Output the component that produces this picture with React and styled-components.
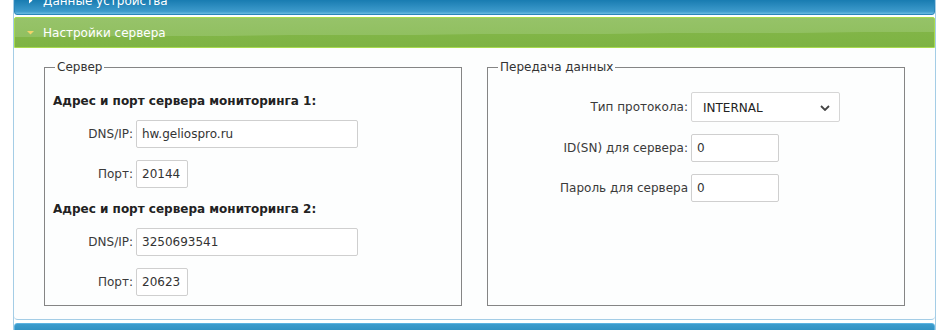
import styled, { createGlobalStyle } from 'styled-components'

const GlobalStyle = createGlobalStyle`
  html, body {
    margin: 0;
    padding: 0;
    background: #ffffff;
    overflow: hidden;
  }
  body {
    font-family: "DejaVu Sans", Verdana, sans-serif;
    font-size: 12px;
    color: #333;
  }
`

const Accordion = styled.div`
  margin-left: 13px;
  width: 921px;
  border-left: 1px solid #a4cde6;
  border-right: 1px solid #a4cde6;
  display: flex;
  flex-direction: column;
`

const Header = styled.div`
  box-sizing: border-box;
  height: ${(p) => (p.active ? 31 : 29)}px;
  display: flex;
  align-items: center;
  gap: 9px;
  padding-left: 12px;
  color: #fff;
  font-size: 12px;
  line-height: 14px;
  border-radius: ${(p) => (p.active ? '2px 2px 0 0' : '3px')};
  border: 1px solid ${(p) => (p.active ? '#a8da4e' : '#2a86ba')};
  background: ${(p) =>
    p.active
      ? 'linear-gradient(179.7deg, #97c36a 0%, #91c061 55%, #81b547 56%, #7db343 100%)'
      : 'linear-gradient(180deg, #0d6aa0 0%, #1a7db2 50%, #3d9acb 90%, #6bbbe2 100%)'};
  margin-top: ${(p) => p.shift || 0}px;
  margin-bottom: ${(p) => (p.active ? 0 : 2)}px;
`

const BottomHeader = styled(Header)`
  margin-top: 3px;
  border-color: #5cb3e0;
  background: linear-gradient(180deg, #3c9ccd 0%, #2e8fbf 30%, #2a88b8 100%);
`

const Arrow = styled.svg`
  flex: none;
  width: 7px;
  height: 7px;
`

const Content = styled.div`
  background: #fdfefe;
  border-bottom: 1px solid #a4cde6;
  border-radius: 0 0 4px 4px;
  padding: 12px 0 13px 30px;
  display: grid;
  grid-template-columns: 418px 418px;
  column-gap: 25px;
`

const Fieldset = styled.fieldset`
  margin: 0;
  box-sizing: border-box;
  border: 1px solid #858585;
  padding: ${(p) => p.top}px 8px 9px 8px;
  display: flex;
  flex-direction: column;
  min-width: 0;
`

const Legend = styled.legend`
  margin-left: 2px;
  padding: 0 2px;
  font-size: 12px;
  line-height: 14px;
  color: #333;
`

const Heading = styled.div`
  font-weight: bold;
  font-size: 12px;
  line-height: 14px;
  color: #222;
  margin-bottom: 12px;
  margin-top: ${(p) => (p.second ? 14 : 0)}px;
`

const Row = styled.div`
  display: grid;
  grid-template-columns: ${(p) => p.label}px auto;
  column-gap: 3px;
  align-items: center;
  justify-content: start;
  margin-bottom: ${(p) => (p.last ? 0 : 12)}px;
`

const Label = styled.label`
  text-align: right;
  white-space: nowrap;
  color: #3a3a3a;
  font-size: 12px;
`

const Input = styled.input`
  box-sizing: border-box;
  width: ${(p) => p.w}px;
  height: 28px;
  border: 1px solid #cfcfcf;
  border-radius: 2px;
  padding: 0 5px;
  font-family: "DejaVu Sans", Verdana, sans-serif;
  font-size: 12px;
  color: #333;
  background: #fff;
  outline: none;
`

const Select = styled.div`
  box-sizing: border-box;
  width: 149px;
  height: 30px;
  border: 1px solid #d6d6d6;
  border-radius: 2px;
  background: #fff;
  display: flex;
  align-items: center;
  justify-content: space-between;
  padding: 2px 9px 0 11px;
  color: #222;
  font-size: 12px;
`

const Chevron = () => (
  <svg width="10" height="6" viewBox="0 0 10 6">
    <path d="M1 1l4 4 4-4" fill="none" stroke="#444" strokeWidth="1.8" />
  </svg>
)

export default function App() {
  return (
    <>
      <GlobalStyle />
      <Accordion>
        <Header shift={-14}>
          <Arrow viewBox="0 0 7 7">
            <path d="M2 0.5l3.5 3-3.5 3z" fill="#fff" />
          </Arrow>
          Данные устройства
        </Header>
        <Header active>
          <Arrow viewBox="0 0 7 7">
            <path d="M0 2h7l-3.5 3.5z" fill="#f3d36a" />
          </Arrow>
          Настройки сервера
        </Header>
        <Content>
          <Fieldset top={20}>
            <Legend>Сервер</Legend>
            <Heading>Адрес и порт сервера мониторинга 1:</Heading>
            <Row label={80}>
              <Label>DNS/IP:</Label>
              <Input w={222} defaultValue="hw.geliospro.ru" readOnly />
            </Row>
            <Row label={80} last>
              <Label>Порт:</Label>
              <Input w={52} defaultValue="20144" readOnly />
            </Row>
            <Heading second>Адрес и порт сервера мониторинга 2:</Heading>
            <Row label={80}>
              <Label>DNS/IP:</Label>
              <Input w={222} defaultValue="3250693541" readOnly />
            </Row>
            <Row label={80} last>
              <Label>Порт:</Label>
              <Input w={52} defaultValue="20623" readOnly />
            </Row>
          </Fieldset>
          <Fieldset top={18}>
            <Legend>Передача данных</Legend>
            <Row label={192}>
              <Label>Тип протокола:</Label>
              <Select>
                INTERNAL
                <Chevron />
              </Select>
            </Row>
            <Row label={192}>
              <Label>ID(SN) для сервера:</Label>
              <Input w={88} defaultValue="0" readOnly />
            </Row>
            <Row label={192} last>
              <Label>Пароль для сервера</Label>
              <Input w={88} defaultValue="0" readOnly />
            </Row>
          </Fieldset>
        </Content>
        <BottomHeader />
      </Accordion>
    </>
  )
}
